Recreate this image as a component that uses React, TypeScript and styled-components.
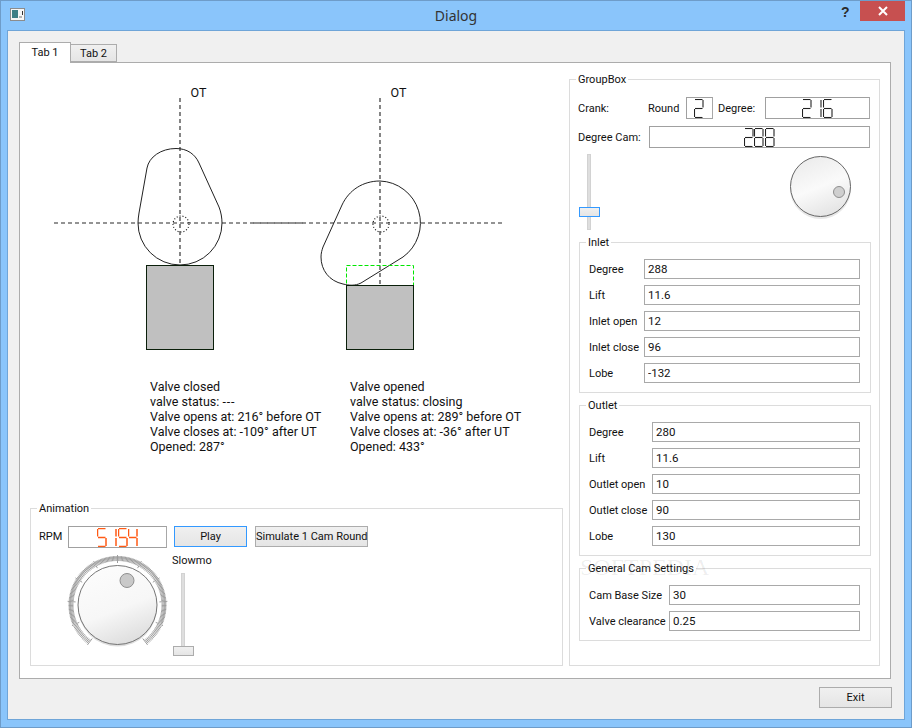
import React from 'react';
import styled, { createGlobalStyle } from 'styled-components';

const GlobalStyle = createGlobalStyle`
  html, body {
    margin: 0;
    padding: 0;
    background: #8ac5fb;
  }
  body {
    font-family: Roboto, 'Noto Sans', sans-serif;
    font-size: 11px;
    color: #111;
  }
`;

/** segments on for each digit: top, top-right, bottom-right, bottom, bottom-left, top-left, middle */
const SEGMENTS: Record<string, string> = {
  '0': 'abcdef',
  '1': 'bc',
  '2': 'abged',
  '3': 'abgcd',
  '4': 'fgbc',
  '5': 'afgcd',
  '6': 'afgedc',
  '7': 'abc',
  '8': 'abcdefg',
  '9': 'abcdfg',
};

const Digit: React.FC<{ value: string; color: string; weight: number }> = ({ value, color, weight }) => {
  const on = SEGMENTS[value] ?? '';
  const lines: Record<string, [number, number, number, number]> = {
    a: [1, 0.5, 8.5, 0.5],
    b: [9, 1, 9, 8.5],
    c: [9, 10, 9, 18],
    d: [1, 18.5, 8.5, 18.5],
    e: [0.5, 10, 0.5, 18],
    f: [0.5, 1, 0.5, 8.5],
    g: [1, 9.5, 8.5, 9.5],
  };
  return (
    <svg width="10.5" height="19" viewBox="0 0 10.5 19">
      {on.split('').map((s) => {
        const [x1, y1, x2, y2] = lines[s];
        return <line key={s} x1={x1} y1={y1} x2={x2} y2={y2} stroke={color} strokeWidth={weight} />;
      })}
    </svg>
  );
};

const LcdFrame = styled.div<{ $width: number }>`
  box-sizing: border-box;
  width: ${({ $width }) => $width}px;
  height: 22px;
  display: flex;
  align-items: center;
  justify-content: center;
  background: #fff;
  border-top: 1px solid #a0a0a0;
  border-left: 1px solid #a0a0a0;
  border-right: 1px solid #a8a8a8;
  border-bottom: 1px solid #a0a0a0;
  flex: none;
`;

const Lcd: React.FC<{ value: string; width: number; color?: string; weight?: number }> = ({
  value,
  width,
  color = '#222',
  weight = 1.1,
}) => (
  <LcdFrame $width={width} aria-label={value}>
    {value.split('').map((d, i) => (
      <Digit key={i} value={d} color={color} weight={weight} />
    ))}
  </LcdFrame>
);

const Window = styled.div`
  box-sizing: border-box;
  width: 912px;
  height: 728px;
  display: flex;
  flex-direction: column;
  background: #8ac5fb;
  border: 1px solid #6e9cc9;
  overflow: hidden;
`;

const TitleBar = styled.div`
  position: relative;
  flex: none;
  height: 29px;
  display: flex;
  align-items: center;
  justify-content: center;
`;

const TitleIcon = styled.svg`
  position: absolute;
  left: 9px;
  top: 7px;
`;

const TitleText = styled.div`
  font-family: 'Noto Sans', sans-serif;
  font-size: 14px;
  color: #333;
  margin-top: -1px;
`;

const HelpMark = styled.div`
  position: absolute;
  left: 840px;
  top: 3px;
  font-family: 'Liberation Sans', sans-serif;
  font-weight: 700;
  font-size: 14px;
  color: #2b2b2b;
`;

const CloseButton = styled.div`
  position: absolute;
  left: 859px;
  top: 0;
  width: 45px;
  height: 20px;
  background: #c75050;
  display: flex;
  align-items: center;
  justify-content: center;
`;

const Client = styled.div`
  flex: 1;
  margin: 0 6px 7px 6px;
  border: 1px solid #6fa5d8;
  background: #f0f0f0;
  padding: 11px 12px 0 11px;
  display: flex;
  flex-direction: column;
`;

const TabBar = styled.div`
  display: flex;
  align-items: flex-end;
  height: 20px;
  flex: none;
  position: relative;
  z-index: 1;
`;

const Tab = styled.div<{ $active?: boolean }>`
  box-sizing: border-box;
  height: ${({ $active }) => ($active ? 21 : 18)}px;
  margin-bottom: ${({ $active }) => ($active ? -1 : 0)}px;
  width: ${({ $active }) => ($active ? 52 : 46)}px;
  padding-top: ${({ $active }) => ($active ? 3 : 2)}px;
  text-align: center;
  border: 1px solid #acacac;
  border-bottom: ${({ $active }) => ($active ? 'none' : '1px solid #acacac')};
  border-left: ${({ $active }) => ($active ? '1px solid #acacac' : 'none')};
  background: ${({ $active }) => ($active ? '#fff' : 'linear-gradient(#f0f0f0, #e5e5e5)')};
`;

const Pane = styled.div`
  position: relative;
  box-sizing: border-box;
  width: 872px;
  height: 617px;
  background: #fff;
  border: 1px solid #acacac;
  display: grid;
  grid-template-columns: 549px 311px;
  flex: none;
`;

const LeftColumn = styled.div`
  display: flex;
  flex-direction: column;
  padding-bottom: 12px;
`;

const Drawing = styled.svg`
  display: block;
  flex: none;
`;

const StatusRow = styled.div`
  display: flex;
  padding-left: 130px;
  margin-top: 6px;
`;

const StatusBlock = styled.div`
  width: 200px;
  line-height: 15px;
  font-size: 12.5px;
`;

const Dashes = styled.span`
  letter-spacing: 0.8px;
`;

const GroupBox = styled.div<{ $height: number }>`
  position: relative;
  box-sizing: border-box;
  height: ${({ $height }) => $height}px;
  border: 1px solid #dcdcdc;
  flex: none;
`;

const GroupTitle = styled.div`
  position: absolute;
  left: 6px;
  top: -8px;
  padding: 0 2px;
  line-height: 16px;
  background: #fff;
`;

const AnimationBox = styled(GroupBox)`
  margin: auto 0 0 10px;
  width: 533px;
  padding: 17px 0 0 8px;
`;

const AnimationTop = styled.div`
  display: flex;
  align-items: flex-start;
`;

const RpmLabel = styled.div`
  width: 29px;
  line-height: 22px;
`;

const PushButton = styled.div<{ $width: number; $focused?: boolean }>`
  box-sizing: border-box;
  width: ${({ $width }) => $width}px;
  height: 21px;
  line-height: 19px;
  text-align: center;
  white-space: nowrap;
  border: 1px solid ${({ $focused }) => ($focused ? '#3399ff' : '#acacac')};
  background: linear-gradient(#f0f0f0, #e5e5e5);
`;

const PlayButton = styled(PushButton)`
  margin: 0 8px 0 7px;
`;

const AnimationBottom = styled.div`
  display: flex;
  padding-left: 27px;
  margin-top: 5px;
`;

const SlowmoColumn = styled.div`
  width: 60px;
  margin-left: 4px;
`;

const SlowmoLabel = styled.div`
  line-height: 16px;
  margin-bottom: 4px;
`;

const SliderTrack = styled.div<{ $height: number; $offset: number }>`
  position: relative;
  box-sizing: border-box;
  width: 4px;
  height: ${({ $height }) => $height}px;
  margin-left: ${({ $offset }) => $offset}px;
  background: #dedede;
  border: 1px solid #d2d2d2;
`;

const SliderHandle = styled.div<{ $top: number; $focused?: boolean }>`
  position: absolute;
  box-sizing: border-box;
  left: -9px;
  top: ${({ $top }) => $top}px;
  width: 21px;
  height: 10px;
  border: 1px solid ${({ $focused }) => ($focused ? '#3399ff' : '#acacac')};
  background: linear-gradient(#f0f0f0, #e5e5e5);
`;

const RightGroup = styled(GroupBox)`
  margin-top: 16px;
  width: 311px;
  padding: 17px 9px 0 8px;
`;

const LcdRow = styled.div`
  display: flex;
  align-items: center;
  height: 22px;
  margin-bottom: 7px;
`;

const LcdLabel = styled.div<{ $width: number }>`
  width: ${({ $width }) => $width}px;
  flex: none;
  white-space: nowrap;
`;

const DegreeLabel = styled(LcdLabel)`
  box-sizing: border-box;
  padding-left: 5px;
`;

const DialRow = styled.div`
  display: flex;
  height: 88px;
  margin-top: -1px;
  padding-left: 9px;
`;

const SmallDial = styled.svg`
  margin-left: 197px;
`;

const SubGroup = styled(GroupBox)`
  margin: 0 0 12px 1px;
  width: 292px;
  padding: 16px 10px 0 9px;
`;

const FormGrid = styled.div<{ $labelWidth: number }>`
  display: grid;
  grid-template-columns: ${({ $labelWidth }) => $labelWidth}px 1fr;
  row-gap: 6px;
  align-items: center;
`;

const FieldLabel = styled.label`
  white-space: nowrap;
`;

const FieldInput = styled.input`
  box-sizing: border-box;
  width: 100%;
  height: 20px;
  border: 1px solid #a9a9a9;
  padding: 0 3px;
  margin: 0;
  font: inherit;
  font-size: 11.5px;
  color: #111;
  background: #fff;
  outline: none;
`;

const Watermark = styled.div`
  position: absolute;
  left: 560px;
  top: 491px;
  font-family: 'Liberation Serif', serif;
  font-size: 24px;
  color: rgba(0, 0, 0, 0.08);
  pointer-events: none;
`;

const Footer = styled.div`
  flex: 1;
  display: flex;
  justify-content: flex-end;
  align-items: flex-start;
  padding-top: 8px;
`;

const inlet: [string, string][] = [
  ['Degree', '288'],
  ['Lift', '11.6'],
  ['Inlet open', '12'],
  ['Inlet close', '96'],
  ['Lobe', '-132'],
];
const outlet: [string, string][] = [
  ['Degree', '280'],
  ['Lift', '11.6'],
  ['Outlet open', '10'],
  ['Outlet close', '90'],
  ['Lobe', '130'],
];
const general: [string, string][] = [
  ['Cam Base Size', '30'],
  ['Valve clearance', '0.25'],
];

const Form: React.FC<{ rows: [string, string][]; labelWidth: number }> = ({ rows, labelWidth }) => (
  <FormGrid $labelWidth={labelWidth}>
    {rows.map(([label, value]) => (
      <React.Fragment key={label}>
        <FieldLabel>{label}</FieldLabel>
        <FieldInput readOnly defaultValue={value} />
      </React.Fragment>
    ))}
  </FormGrid>
);

const CamDrawing: React.FC = () => (
  <Drawing width="545" height="310" viewBox="20 63 545 310">
    <g stroke="#707070" strokeWidth="1.7" strokeDasharray="4 3" fill="none">
      <line x1="54" y1="223" x2="305" y2="223" />
      <line x1="253" y1="223" x2="505" y2="223" />
      <line x1="180" y1="98" x2="180" y2="265" />
      <line x1="380" y1="98" x2="380" y2="285" />
    </g>
    <g stroke="#111" strokeWidth="1.1" strokeDasharray="1 2" fill="none">
      <circle cx="181" cy="224" r="8" />
      <circle cx="381" cy="224" r="8" />
    </g>
    <g stroke="#222" strokeWidth="1" fill="none">
      <path d="M176 148.5 C187 148.5 195 154 199 163 L219 207 C221 212 222 218 222 223 A42 42 0 0 1 138 223 C138 220 138.5 216 139 213 L147 168 C149 157 161 148.5 176 148.5 Z" />
      <path d="M380 181 A42 42 0 0 1 403 257 L361 283 C355 286 349 285.5 343 284 C329 281 321 270 321 257 C321 253 322 250 323 247 L342 205 C349 190 363 181 380 181 Z" />
    </g>
    <rect x="346.5" y="265.5" width="67" height="20" fill="none" stroke="#00e600" strokeDasharray="4 2" />
    <rect x="146.5" y="265.5" width="67" height="84" fill="#c0c0c0" stroke="#0a1f0a" />
    <rect x="346.5" y="285.5" width="67" height="64" fill="#c0c0c0" stroke="#0a1f0a" />
    <text x="190.5" y="97" fontSize="12.5" fill="#111">OT</text>
    <text x="390.5" y="97" fontSize="12.5" fill="#111">OT</text>
  </Drawing>
);

const ticks = Array.from({ length: 181 }, (_, i) => -143 + (286 * i) / 180);

const polar = (deg: number, r: number): [number, number] => {
  const rad = (deg * Math.PI) / 180;
  return [117.5 + r * Math.sin(rad), 605 - r * Math.cos(rad)];
};

const BigDial: React.FC = () => {
  const [bx, by] = polar(-112, 47.5);
  const [ex, ey] = polar(112, 47.5);
  return (
    <svg width="102" height="104" viewBox="66 553 102 104">
      <defs>
        <linearGradient id="knob" x1="0.3" y1="0" x2="0.7" y2="1">
          <stop offset="0" stopColor="#fcfcfc" />
          <stop offset="0.55" stopColor="#f7f7f7" />
          <stop offset="1" stopColor="#dcdcdc" />
        </linearGradient>
      </defs>
      <circle cx="117.5" cy="607" r="39.5" fill="#dedede" />
      <g stroke="#7d7d7d" strokeWidth="0.75">
        {ticks.map((deg, i) => {
          const major = i % 18 === 0;
          const [x1, y1] = polar(deg, major ? 42 : 44);
          const [x2, y2] = polar(deg, major ? 50 : 49);
          return <line key={i} x1={x1} y1={y1} x2={x2} y2={y2} />;
        })}
      </g>
      <path
        d={`M${bx} ${by} A47.5 47.5 0 1 1 ${ex} ${ey}`}
        fill="none"
        stroke="#9a9a9a"
        strokeWidth="1.8"
        opacity="0.55"
      />
      <circle cx="117.5" cy="605" r="39.5" fill="url(#knob)" stroke="#666" strokeWidth="0.9" />
      <circle cx="127" cy="580.5" r="7" fill="#c9c9c9" stroke="#8f8f8f" />
    </svg>
  );
};

const App: React.FC = () => (
  <Window>
    <GlobalStyle />
    <TitleBar>
      <TitleIcon width="16" height="14" viewBox="0 0 16 14">
        <rect x="0.5" y="0.5" width="14" height="12" fill="#f6f6f6" stroke="#8c8c8c" />
        <rect x="2" y="2" width="6" height="8" fill="#3d7f86" />
        <rect x="9" y="8" width="3" height="2" fill="#b5b5b5" />
        <rect x="12" y="3" width="1" height="4" fill="#333" />
      </TitleIcon>
      <TitleText>Dialog</TitleText>
      <HelpMark>?</HelpMark>
      <CloseButton>
        <svg width="10" height="10" viewBox="0 0 10 10">
          <path d="M1 1 L9 9 M9 1 L1 9" stroke="#fff" strokeWidth="2" />
        </svg>
      </CloseButton>
    </TitleBar>
    <Client>
      <TabBar>
        <Tab $active>Tab 1</Tab>
        <Tab>Tab 2</Tab>
      </TabBar>
      <Pane>
        <LeftColumn>
          <CamDrawing />
          <StatusRow>
            <StatusBlock>
              Valve closed
              <br />
              valve status: <Dashes>---</Dashes>
              <br />
              Valve opens at: 216° before OT
              <br />
              Valve closes at: -109° after UT
              <br />
              Opened: 287°
            </StatusBlock>
            <StatusBlock>
              Valve opened
              <br />
              valve status: closing
              <br />
              Valve opens at: 289° before OT
              <br />
              Valve closes at: -36° after UT
              <br />
              Opened: 433°
            </StatusBlock>
          </StatusRow>
          <AnimationBox $height={158}>
            <GroupTitle>Animation</GroupTitle>
            <AnimationTop>
              <RpmLabel>RPM</RpmLabel>
              <Lcd value="5154" width={99} color="#ff5a14" weight={1.5} />
              <PlayButton $width={73} $focused>
                Play
              </PlayButton>
              <PushButton $width={113}>Simulate 1 Cam Round</PushButton>
            </AnimationTop>
            <AnimationBottom>
              <BigDial />
              <SlowmoColumn>
                <SlowmoLabel>Slowmo</SlowmoLabel>
                <SliderTrack $height={83} $offset={9}>
                  <SliderHandle $top={72} />
                </SliderTrack>
              </SlowmoColumn>
            </AnimationBottom>
          </AnimationBox>
        </LeftColumn>
        <RightGroup $height={587}>
          <GroupTitle>GroupBox</GroupTitle>
          <LcdRow>
            <LcdLabel $width={70}>Crank:</LcdLabel>
            <LcdLabel $width={38}>Round</LcdLabel>
            <Lcd value="2" width={27} />
            <DegreeLabel $width={52}>Degree:</DegreeLabel>
            <Lcd value="216" width={105} />
          </LcdRow>
          <LcdRow>
            <LcdLabel $width={71}>Degree Cam:</LcdLabel>
            <Lcd value="288" width={221} />
          </LcdRow>
          <DialRow>
            <SliderTrack $height={76} $offset={0}>
              <SliderHandle $top={52} $focused />
            </SliderTrack>
            <SmallDial width="66" height="66" viewBox="788 160 66 66">
              <defs>
                <linearGradient id="smallKnob" x1="0.3" y1="0" x2="0.7" y2="1">
                  <stop offset="0" stopColor="#ececec" />
                  <stop offset="0.5" stopColor="#fafafa" />
                  <stop offset="1" stopColor="#e2e2e2" />
                </linearGradient>
              </defs>
              <circle cx="820.5" cy="194.5" r="30.5" fill="#e8e8e8" />
              <circle cx="820.5" cy="192.5" r="30" fill="url(#smallKnob)" stroke="#666" />
              <circle cx="839" cy="198" r="5.5" fill="#cfcfcf" stroke="#8f8f8f" />
            </SmallDial>
          </DialRow>
          <SubGroup $height={151}>
            <GroupTitle>Inlet</GroupTitle>
            <Form rows={inlet} labelWidth={55} />
          </SubGroup>
          <SubGroup $height={151}>
            <GroupTitle>Outlet</GroupTitle>
            <Form rows={outlet} labelWidth={63} />
          </SubGroup>
          <SubGroup $height={73}>
            <GroupTitle>General Cam Settings</GroupTitle>
            <Form rows={general} labelWidth={80} />
          </SubGroup>
        </RightGroup>
        <Watermark>SOFTPEDIA</Watermark>
      </Pane>
      <Footer>
        <PushButton $width={73}>Exit</PushButton>
      </Footer>
    </Client>
  </Window>
);

export default App;
